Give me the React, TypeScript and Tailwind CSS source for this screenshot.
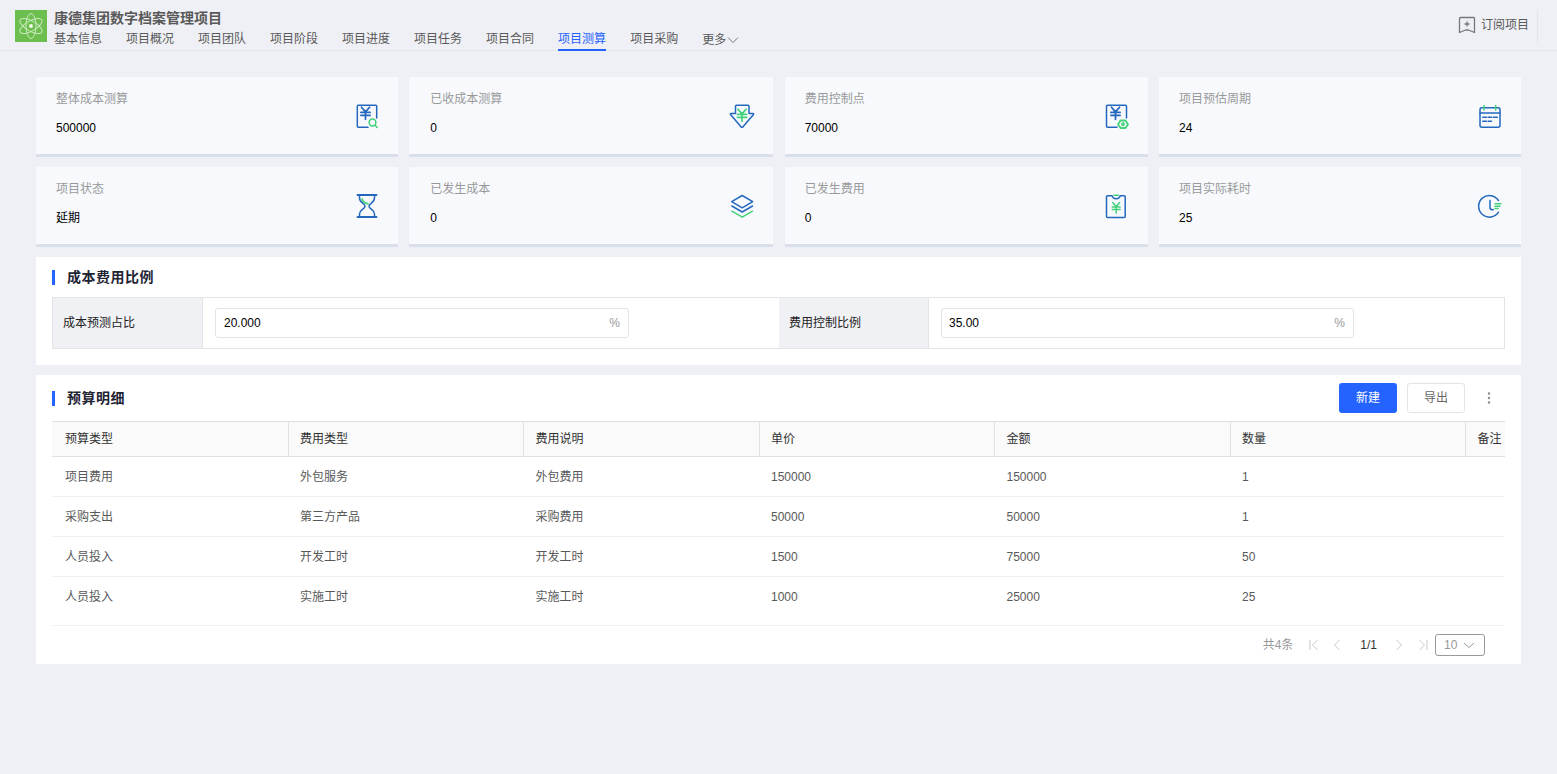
import React from "react";

const B = "#2468bd";
const G = "#43d17a";

const Svg = ({ children }: { children: React.ReactNode }) => (
  <svg width="26" height="26" viewBox="0 0 26 26" fill="none" strokeLinecap="round" strokeLinejoin="round" strokeWidth="1.5" stroke={B}>
    {children}
  </svg>
);

const Yen = ({ x, y, c = B, s = 1 }: { x: number; y: number; c?: string; s?: number }) => (
  <g transform={`translate(${x} ${y}) scale(${s})`} stroke={c}>
    <path d="M-3.5 -5 L0 -1 L3.5 -5 M-4 -0.5 H4 M-4 2 H4 M0 -1 V5.5" />
  </g>
);

const icons: Record<string, React.ReactNode> = {
  a: (
    <Svg>
      <path d="M14 24.2 H4.3 a1 1 0 0 1 -1 -1 V3.2 a1 1 0 0 1 1 -1 H21.7 a1 1 0 0 1 1 1 V15" />
      <Yen x={11.5} y={10} s={1.15} />
      <circle cx="18.5" cy="19.5" r="3.4" stroke={G} />
      <path d="M21 22 L23.2 24.5" stroke={G} />
    </Svg>
  ),
  b: (
    <Svg>
      <path d="M6.5 10.5 V3.2 a1 1 0 0 1 1 -1 H19 a1 1 0 0 1 1 1 V10.5 H24 a0.6 0.6 0 0 1 0.5 1 L14 23.8 a1.2 1.2 0 0 1 -2 0 L1.5 11.5 a0.6 0.6 0 0 1 0.5 -1 Z" />
      <Yen x={13} y={12} c={G} s={1.15} />
    </Svg>
  ),
  c: (
    <Svg>
      <path d="M13 24.2 H3.5 a1 1 0 0 1 -1 -1 V3.2 a1 1 0 0 1 1 -1 H21.5 a1 1 0 0 1 1 1 V15" />
      <Yen x={11.5} y={10} s={1.15} />
      <path d="M16.5 17.5 H21.5 L24 21.5 L21.5 25 H16.5 L14 21.5 Z" stroke={G} strokeWidth="1.8" />
      <circle cx="19" cy="21.3" r="1.2" stroke={G} />
    </Svg>
  ),
  d: (
    <Svg>
      <rect x="3" y="4.8" width="20" height="19.4" rx="2" />
      <path d="M3 10 H23" />
      <path d="M7 2.5 V7 M18.7 2.5 V7" stroke={G} />
      <path d="M5.8 14.2 H9.5 M11.2 14.2 H14.5 M16.3 14.2 H20.3 M5.8 18.2 H9.5 M11.2 18.2 H14.5" />
    </Svg>
  ),
  e: (
    <Svg>
      <path d="M3.5 2 H22.5 M3.5 24 H22.5" strokeWidth="1.8" />
      <path d="M5.5 2 V5 C5.5 10 11 10.5 11 13.2 C11 16 5.5 16.5 5.5 21 V24 M20.5 2 V5 C20.5 10 15 10.5 15 13.2 C15 16 20.5 16.5 20.5 21 V24" />
      <path d="M8 6 C8.8 8.5 11.5 10.3 14 10.8" stroke={G} strokeWidth="1.8" />
    </Svg>
  ),
  f: (
    <Svg>
      <path d="M13.2 2.5 L23.7 8.7 L13.2 14.8 L2.7 8.7 Z" />
      <path d="M2.9 13 L13.2 19 L23.5 13" />
      <path d="M2.9 18.2 L13.2 24.2 L23.5 18.2" stroke={G} />
    </Svg>
  ),
  g: (
    <Svg>
      <path d="M8 2.7 H3.5 a1 1 0 0 0 -1 1 V23.5 a1 1 0 0 0 1 1 H20.2 a1 1 0 0 0 1 -1 V3.7 a1 1 0 0 0 -1 -1 H16.3 C15.8 4.8 14.5 5.8 12.2 5.8 C9.9 5.8 8.5 4.8 8 2.7 Z" />
      <path d="M10 2.3 H14.5" stroke={G} />
      <Yen x={12.2} y={14.5} c={G} />
    </Svg>
  ),
  h: (
    <Svg>
      <path d="M21.5 7.5 A10.8 10.8 0 1 0 21.5 19.2" />
      <path d="M13 7.5 V15 Q13 16.8 16.3 16.8" />
      <path d="M18 10.8 H24 M18 13.2 H23 M18 15.5 H21" stroke={G} />
    </Svg>
  ),
};

const cards = [
  ["整体成本测算", "500000", "a"],
  ["已收成本测算", "0", "b"],
  ["费用控制点", "70000", "c"],
  ["项目预估周期", "24", "d"],
  ["项目状态", "延期", "e"],
  ["已发生成本", "0", "f"],
  ["已发生费用", "0", "g"],
  ["项目实际耗时", "25", "h"],
];

const nav = ["基本信息", "项目概况", "项目团队", "项目阶段", "项目进度", "项目任务", "项目合同", "项目测算", "项目采购"];

const columns = ["预算类型", "费用类型", "费用说明", "单价", "金额", "数量", "备注"];
const rows = [
  ["项目费用", "外包服务", "外包费用", "150000", "150000", "1", ""],
  ["采购支出", "第三方产品", "采购费用", "50000", "50000", "1", ""],
  ["人员投入", "开发工时", "开发工时", "1500", "75000", "50", ""],
  ["人员投入", "实施工时", "实施工时", "1000", "25000", "25", ""],
];

const Title = ({ children }: { children: React.ReactNode }) => (
  <div className="flex items-center gap-3">
    <span className="h-[15px] w-[3px] bg-[#2563ff]" />
    <span className="text-[14px] font-bold leading-[16px] text-[#1f2433] tracking-[0.5px]">{children}</span>
  </div>
);

const FormCell = ({ label, value, second }: { label: string; value: string; second?: boolean }) => (
  <div className={second ? "flex flex-1" : "flex w-[726px]"}>
    <div className="flex w-[150px] items-center border-r border-[#e4e4e7] bg-[#f0f1f5] pl-[10px] text-[12px] text-[#222]">{label}</div>
    <div className="flex flex-1 items-center pl-3">
      <div
        className={
          second
            ? "flex h-[30px] w-[413px] items-center justify-between rounded-[3px] border border-[#e4e4e7] bg-white pl-[7px] pr-2"
            : "flex h-[30px] w-[414px] items-center justify-between rounded-[3px] border border-[#e4e4e7] bg-white pl-2 pr-2"
        }
      >
        <span className="text-[12px] text-black">{value}</span>
        <span className="text-[12px] text-[#999]">%</span>
      </div>
    </div>
  </div>
);

const PagerIcon = ({ d, c = "#c9c9c9" }: { d: string; c?: string }) => (
  <svg width="12" height="12" viewBox="0 0 12 12" fill="none" stroke={c} strokeWidth="1">
    <path d={d} />
  </svg>
);

export default function App() {
  return (
    <div className="min-h-screen bg-[#eff0f5] font-['Liberation_Sans','Noto_Sans_CJK_SC',sans-serif]">
      <header className="flex h-[51px] items-start justify-between border-b border-[#e5e6ea] pl-[15px] pr-[19px]">
        <div className="flex gap-[7px] pt-[10px]">
          <div className="flex h-8 w-8 items-center justify-center bg-[#6cbf4f]">
            <svg width="28" height="28" viewBox="0 0 28 28" fill="none" stroke="#c9e9ba" strokeWidth="1">
              <ellipse cx="14" cy="14" rx="12.5" ry="5" transform="rotate(30 14 14)" />
              <ellipse cx="14" cy="14" rx="12.5" ry="5" transform="rotate(-30 14 14)" />
              <ellipse cx="14" cy="14" rx="5" ry="12.5" />
              <circle cx="14" cy="14" r="2" fill="#f2fbe9" stroke="none" />
            </svg>
          </div>
          <div className="flex flex-col">
            <div className="text-[14px] font-bold leading-[16px] text-[#595959]">康德集团数字档案管理项目</div>
            <nav className="flex items-start gap-6 pt-[4px]">
              {nav.map((n) => (
                <span
                  key={n}
                  className={
                    n === "项目测算"
                      ? "h-[21px] border-b-2 border-[#2563ff] text-[12px] leading-[18px] text-[#2563ff]"
                      : "h-[21px] text-[12px] leading-[18px] text-[#595959]"
                  }
                >
                  {n}
                </span>
              ))}
              <span className="flex h-[19px] items-center text-[12px] leading-[18px] text-[#595959]">
                更多
                <svg width="12" height="12" viewBox="0 0 12 12" fill="none" stroke="#777" strokeWidth="1" className="ml-[1px]">
                  <path d="M1 3.5 L6 8.5 L11 3.5" />
                </svg>
              </span>
            </nav>
          </div>
        </div>
        <div className="flex items-center pt-[10px]">
          <div className="flex items-center pb-[2px]">
            <svg width="18" height="18" viewBox="0 0 18 18" fill="none" stroke="#777" strokeWidth="1.3" strokeLinejoin="round">
              <path d="M1.5 2.5 a1 1 0 0 1 1 -1 H15.5 a1 1 0 0 1 1 1 V16.5 L10.5 14 H7.5 L1.5 16.5 Z" />
              <path d="M9 5.5 V10.5 M6.5 8 H11.5" />
            </svg>
            <span className="ml-[5px] text-[12px] leading-[30px] text-[#595959]">订阅项目</span>
          </div>
          <span className="ml-2 h-8 w-px bg-[#e3e4e8]" />
        </div>
      </header>

      <main className="flex flex-col gap-[10px] px-9 pt-[26px]">
        <div className="grid grid-cols-[362px_364px_363px_362px] justify-between gap-y-[10px]">
          {cards.map(([label, value, icon], i) => (
            <div
              key={label}
              className={
                i % 4 === 1
                  ? "flex h-[80px] items-center justify-between border-b-[3px] border-[#d9e0ea] bg-[#f7f9fd] pl-[21px] pr-[18px]"
                  : "flex h-[80px] items-center justify-between border-b-[3px] border-[#d9e0ea] bg-[#f7f9fd] pl-5 pr-[18px]"
              }
            >
              <div className="flex flex-col pb-[4px]">
                <span className="text-[12px] leading-[18px] text-[#999]">{label}</span>
                <span className="pt-[11px] text-[12px] leading-[18px] text-black">{value}</span>
              </div>
              {icons[icon]}
            </div>
          ))}
        </div>

        <section className="flex h-[108px] flex-col bg-white px-4 pt-[12px]">
          <Title>成本费用比例</Title>
          <div className="mt-[12px] flex h-[52px] border border-[#e4e4e7]">
            <FormCell label="成本预测占比" value="20.000" />
            <FormCell label="费用控制比例" value="35.00" second />
          </div>
        </section>

        <section className="flex h-[289px] flex-col bg-white px-4">
          <div className="flex h-[46px] items-center justify-between">
            <Title>预算明细</Title>
            <div className="flex items-center pr-[14px]">
              <button className="h-[30px] w-[58px] rounded-[3px] bg-[#2563ff] text-[12px] text-white">新建</button>
              <button className="ml-[10px] h-[30px] w-[58px] rounded-[3px] border border-[#e4e4e7] bg-white text-[12px] text-[#666]">导出</button>
              <svg width="4" height="14" viewBox="0 0 4 14" fill="#8c8c8c" className="ml-[22px]">
                <circle cx="2" cy="2.5" r="1.2" />
                <circle cx="2" cy="7" r="1.2" />
                <circle cx="2" cy="11.5" r="1.2" />
              </svg>
            </div>
          </div>

          <div className="overflow-hidden">
            <div className="flex h-9 w-[1652px] border-y border-[#dfe1e8] bg-[#fafafa]">
              {columns.map((c, j) => (
                <div
                  key={c}
                  className={
                    j === 0
                      ? "flex w-[236.5px] shrink-0 items-center border-r border-[#dfe1e8] pl-[13px] text-[12px] text-[#333]"
                      : "flex w-[235.5px] shrink-0 items-center border-r border-[#dfe1e8] pl-[11.5px] text-[12px] text-[#333]"
                  }
                >
                  {c}
                </div>
              ))}
            </div>
            {rows.map((r, i) => (
              <div key={i} className={i < 3 ? "flex h-10 w-[1652px] border-b border-[#f0f0f2]" : "flex h-10 w-[1652px]"}>
                {r.map((v, j) => (
                  <div
                    key={j}
                    className={
                      j === 0
                        ? "flex w-[236.5px] shrink-0 items-center pl-[13px] text-[12px] text-[#595959]"
                        : "flex w-[235.5px] shrink-0 items-center pl-[11.5px] text-[12px] text-[#595959]"
                    }
                  >
                    {v}
                  </div>
                ))}
              </div>
            ))}
          </div>

          <div className="mt-2 flex h-[39px] items-center justify-end border-t border-[#f0f0f2] pr-5">
            <span className="text-[12px] text-[#999]">共4条</span>
            <span className="ml-[15px] flex">
              <PagerIcon d="M2 1 V11 M9.5 1 L4.5 6 L9.5 11" />
            </span>
            <span className="ml-[11px] flex">
              <PagerIcon d="M8.5 1 L3.5 6 L8.5 11" />
            </span>
            <span className="ml-[17px] text-[12px] text-[#333]">1/1</span>
            <span className="ml-[16px] flex">
              <PagerIcon d="M3.5 1 L8.5 6 L3.5 11" />
            </span>
            <span className="ml-[12px] flex">
              <PagerIcon d="M2.5 1 L7.5 6 L2.5 11 M10 1 V11" />
            </span>
            <span className="ml-[6px] flex h-[22px] w-[50px] items-center justify-between rounded-[3px] border border-[#999] pl-2 pr-[9px] text-[12px] text-[#999]">
              10
              <PagerIcon d="M1 4 L6 8.5 L11 4" c="#999" />
            </span>
          </div>
        </section>
      </main>
    </div>
  );
}
